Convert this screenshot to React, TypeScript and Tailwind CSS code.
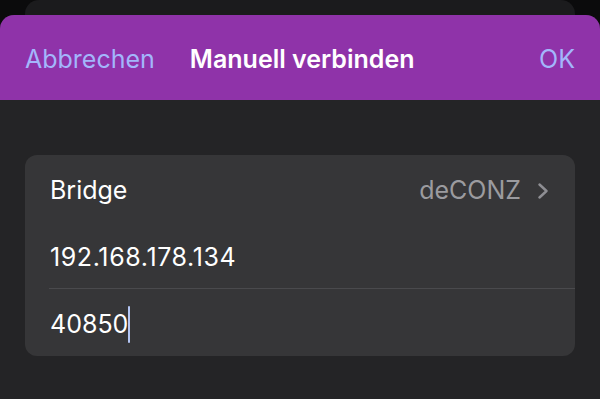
function Row({
  children,
  divider = false,
}: {
  children: React.ReactNode;
  divider?: boolean;
}) {
  return (
    <div className="relative flex h-[67px] items-center pl-[25px] pr-[26px] pt-[4px]">
      {children}
      {divider && (
        <div className="absolute bottom-0 left-[24px] right-0 h-px bg-[#4a4a4d]" />
      )}
    </div>
  );
}

function Chevron() {
  return (
    <svg
      viewBox="0 0 12 16"
      className="ml-[16px] h-[16px] w-[12px] text-[#8e8e93]"
      fill="none"
      stroke="currentColor"
      strokeWidth={2.4}
      strokeLinecap="round"
      strokeLinejoin="round"
    >
      <path d="M2.5 1.5 L9.5 8 L2.5 14.5" />
    </svg>
  );
}

export default function App() {
  return (
    <div
      className="relative h-[399px] w-[600px] overflow-hidden bg-[#0b0b0c] text-white"
      style={{ fontFamily: "Inter, 'Noto Sans', sans-serif" }}
    >
      {/* sheet stacked behind */}
      <div className="mx-[25px] h-[30px] rounded-t-[14px] bg-[#1b1b1d]" />

      <div className="absolute inset-x-0 top-[15px] bottom-0 flex flex-col rounded-t-[14px] bg-[#242426]">
        <header className="flex h-[85px] items-center rounded-t-[14px] bg-[#8f33a9] px-[25px] pt-[4px] text-[25px]">
          <button className="text-[#a3b6fb]">Abbrechen</button>
          <h1 className="ml-[35px] font-semibold text-white">Manuell verbinden</h1>
          <button className="ml-auto text-[#a3b6fb]">OK</button>
        </header>

        <div className="mx-[25px] mt-[55px] overflow-hidden rounded-[12px] bg-[#363638] text-[25px]">
          <Row>
            <span>Bridge</span>
            <span className="ml-auto text-[#9b9b9f]">deCONZ</span>
            <Chevron />
          </Row>
          <Row divider>
            <span className="tracking-[0.6px]">192.168.178.134</span>
          </Row>
          <Row>
            <span>40850</span>
            <span className="h-[37px] w-[2px] rounded-full bg-[#b4c6f4]" />
          </Row>
        </div>
      </div>
    </div>
  );
}
